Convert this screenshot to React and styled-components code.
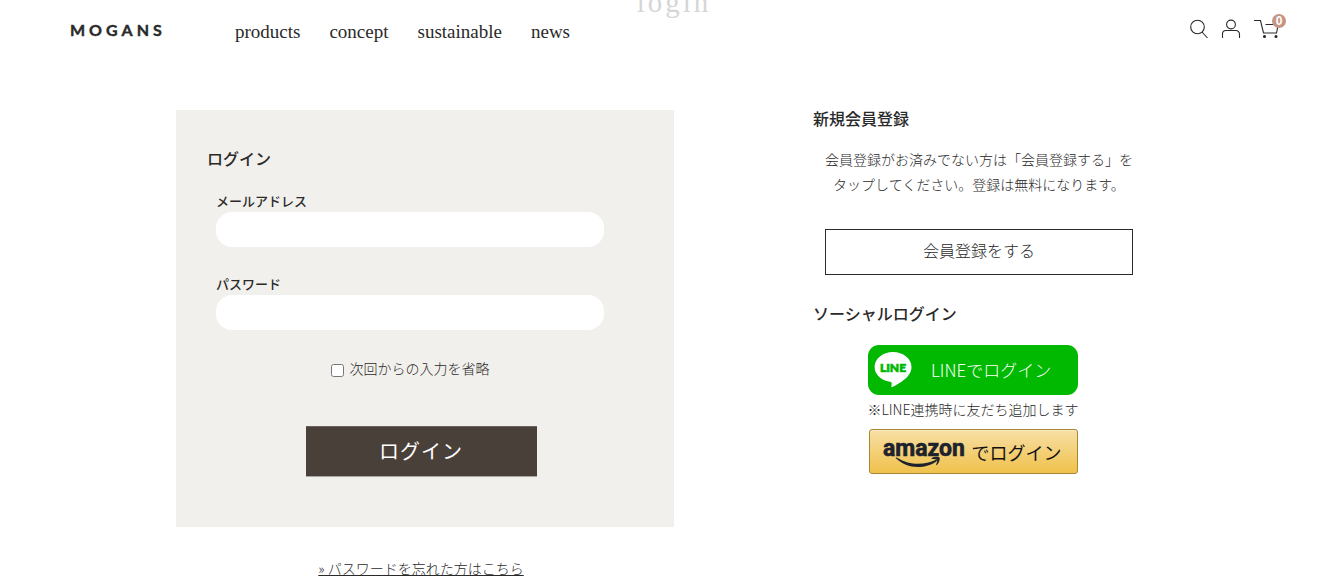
import React from 'react';
import styled, { createGlobalStyle } from 'styled-components';

const ink = '#2a2a2a';
const serif = '"Liberation Serif", "Noto Sans CJK JP", serif';

const GlobalStyle = createGlobalStyle`
  *, *::before, *::after { box-sizing: border-box; }
  body {
    margin: 0;
    background: #fff;
    color: ${ink};
    font-family: "Noto Sans CJK JP", sans-serif;
    font-size: 14px;
    font-weight: 300;
  }
  h1, h2, p { margin: 0; }
  a { color: inherit; }
  button, input { font-family: inherit; }
`;

const Page = styled.div`
  position: relative;
  overflow: hidden;
`;

const PageTitle = styled.h1`
  position: absolute;
  top: -16px;
  left: 0;
  width: 100%;
  padding-left: 6px;
  text-align: center;
  font: 400 29px/36px ${serif};
  letter-spacing: 3px;
  color: #d6d6d6;
  pointer-events: none;
`;

const Header = styled.header`
  display: flex;
  align-items: center;
  height: 60px;
  padding: 0 56px 0 70px;
`;

const Logo = styled.a`
  width: 165px;
  font: 700 16px/20px Lato, sans-serif;
  letter-spacing: 4px;
  text-decoration: none;
  -webkit-text-stroke: 0.4px ${ink};
`;

const Nav = styled.nav`
  display: flex;
  flex: 1;
  gap: 29px;
  padding-top: 3px;
`;

const NavLink = styled.a`
  font: 400 19px/24px ${serif};
  text-decoration: none;
`;

const Tools = styled.div`
  display: flex;
  align-items: center;
  gap: 12px;
  padding-bottom: 2px;
`;

const Tool = styled.a`
  position: relative;
  display: block;
  height: 20px;
  padding-right: ${(p) => (p.$badged ? '6px' : '0')};

  svg {
    display: block;
    fill: none;
    stroke: ${ink};
    stroke-width: 1.1;
  }
`;

const Badge = styled.span`
  position: absolute;
  top: -5px;
  right: 0;
  width: 14px;
  height: 14px;
  border-radius: 50%;
  background: #c59584;
  color: #fff;
  font: 700 12px/14px "Liberation Sans", sans-serif;
  text-align: center;
`;

const Main = styled.main`
  display: flex;
  justify-content: space-between;
  max-width: 990px;
  margin: 0 auto;
  padding-top: 50px;
`;

const LoginColumn = styled.section`
  flex: 0 1 498px;
`;

const SideColumn = styled.section`
  flex: 0 1 353px;
  padding-right: 33px;
`;

const Panel = styled.div`
  padding: 40px 48px 50px 31px;
  background: #f2f0ec;
`;

const Heading = styled.h2`
  font-size: 16px;
  line-height: 16px;
  font-weight: 500;
`;

const Form = styled.form`
  display: flex;
  flex-direction: column;
  padding: 25px 0 0 9px;
`;

const Field = styled.div`
  display: flex;
  flex-direction: column;
  margin: 0 22px 27px 0;
`;

const FieldLabel = styled.label`
  margin-bottom: 1px;
  font-size: 13px;
  line-height: 20px;
  font-weight: 500;
`;

const TextInput = styled.input`
  height: 35px;
  padding: 0 14px;
  border: 0;
  border-radius: 16px;
  background: #fff;
  font-size: 14px;
`;

const Remember = styled.label`
  display: flex;
  align-items: center;
  justify-content: center;
  gap: 6px;
  margin: 0 22px 0 0;
  line-height: 22px;

  input {
    width: 13px;
    height: 13px;
    margin: 4px 0 0;
  }
`;

const Submit = styled.button`
  align-self: center;
  width: 231px;
  height: 51px;
  margin-top: 47px;
  padding: 0 0 2px;
  border: 0;
  border-top: 1px solid #6b645e;
  border-bottom: 1px solid #aaa7a3;
  background: #4a403a;
  color: #fff;
  font-size: 20px;
  font-weight: 400;
  letter-spacing: 1px;
`;

const Forgot = styled.p`
  padding: 31px 8px 8px 0;
  line-height: 20px;
  text-align: center;
`;

const Join = styled.div`
  margin-bottom: 30px;
  padding: 21px 0 0 12px;
  text-align: center;
  line-height: 25px;
`;

const JoinButton = styled.button`
  display: block;
  width: 100%;
  height: 46px;
  margin-top: 32px;
  padding: 0 0 4px;
  border: 1px solid ${ink};
  background: #fff;
  color: inherit;
  font-size: 16px;
  font-weight: 300;
`;

const Social = styled.div`
  display: flex;
  flex-direction: column;
  align-items: center;
  padding-top: 24px;
`;

const SocialButton = styled.button`
  display: flex;
  align-items: center;
  padding: 0;
  border: 0;
  white-space: nowrap;
`;

const LineButton = styled(SocialButton)`
  gap: 19px;
  width: 210px;
  height: 50px;
  padding: 0 0 2px 6px;
  border-radius: 11px;
  background: #00b900;
  color: #fff;
  font-size: 17px;
  font-weight: 300;
`;

const AmazonButton = styled(SocialButton)`
  gap: 4px;
  width: 209px;
  height: 45px;
  padding-left: 13px;
  border: 1px solid #a88734;
  border-radius: 3px;
  background: linear-gradient(#f7dfa5, #f0c14b);
  box-shadow: inset 0 1px 0 #faeac4;
  color: #111;
  font-size: 18px;
  font-weight: 400;
`;

const Note = styled.p`
  margin: 4px 0 10px;
  line-height: 20px;
  white-space: nowrap;
`;

const LineLogo = () => (
  <svg width="38" height="38" viewBox="0 0 38 38" aria-hidden="true">
    <path
      fill="#fff"
      d="M19 2C8.900 2 .6 8.700 .6 17c0 7.400 6.500 13.600 15.400 14.800 1.700.3 1.900 1.200 1.600 2.700l-.3 2c-.1.600.4.900 1.100.600C22 35.400 30 30.500 33.800 26.200c2.500-2.800 3.700-5.700 3.700-9.200C37.500 8.700 29.200 2 19 2z"
    />
    <text
      x="19"
      y="22"
      textAnchor="middle"
      fill="#00b900"
      stroke="#00b900"
      strokeWidth=".7"
      fontFamily="Lato, sans-serif"
      fontSize="12"
      fontWeight="900"
    >
      LINE
    </text>
  </svg>
);

const AmazonLogo = () => (
  <svg width="85" height="34" viewBox="0 0 85 34" aria-hidden="true">
    <text
      x="0"
      y="21"
      fill="#1d222c"
      stroke="#1d222c"
      strokeWidth=".6"
      fontFamily="Roboto, sans-serif"
      fontSize="23"
      fontWeight="700"
    >
      amazon
    </text>
    <path
      fill="#1d222c"
      d="M13.500 22.500c8 4.700 14.500 6.300 21.500 6.300 6.500 0 12.500-1.500 18-4.100 1-.4 1.700.6.800 1.300-5.200 4.100-12.200 6-19 6-8.500 0-16-3.300-21.700-8.500-.6-.5-.2-1.300.4-1z"
    />
    <path
      fill="#1d222c"
      d="M48.500 23.200c2.600-1.800 7.200-1.500 8-.7.800 1-.3 5.600-2.800 7.600-.4.300-.8.100-.6-.3.700-1.700 1.500-4.300 1-5-.5-.7-3.400-.6-5.200-.9-.6-.1-.8-.4-.4-.7z"
    />
  </svg>
);

const navItems = ['products', 'concept', 'sustainable', 'news'];

export default function App() {
  return (
    <Page>
      <GlobalStyle />
      <PageTitle>login</PageTitle>
      <Header>
        <Logo href="#home">MOGANS</Logo>
        <Nav>
          {navItems.map((item) => (
            <NavLink key={item} href={`#${item}`}>
              {item}
            </NavLink>
          ))}
        </Nav>
        <Tools>
          <Tool href="#search" aria-label="search">
            <svg width="20" height="20" viewBox="0 0 20 20">
              <circle cx="8.500" cy="8" r="6.800" />
              <path d="M13 13l5.500 6" />
            </svg>
          </Tool>
          <Tool href="#account" aria-label="account">
            <svg width="20" height="20" viewBox="0 0 20 20">
              <circle cx="10" cy="5.500" r="4.400" />
              <path d="M1.500 19v-4a3.500 3.500 0 0 1 3.500-3.500h10a3.500 3.500 0 0 1 3.500 3.500V19" />
            </svg>
          </Tool>
          <Tool href="#cart" aria-label="cart" $badged>
            <svg width="27" height="20" viewBox="-1 0 27 20">
              <path d="M0 1.500h6.500l3 12.500H22.500l1.700-8.500H11.500" />
              <circle cx="10.500" cy="17.500" r="1" fill={ink} />
              <circle cx="22" cy="17.500" r="1" fill={ink} />
            </svg>
            <Badge>0</Badge>
          </Tool>
        </Tools>
      </Header>

      <Main>
        <LoginColumn>
          <Panel>
            <Heading>ログイン</Heading>
            <Form onSubmit={(e) => e.preventDefault()}>
              <Field>
                <FieldLabel htmlFor="email">メールアドレス</FieldLabel>
                <TextInput id="email" type="email" />
              </Field>
              <Field>
                <FieldLabel htmlFor="password">パスワード</FieldLabel>
                <TextInput id="password" type="password" />
              </Field>
              <Remember>
                <input type="checkbox" />
                次回からの入力を省略
              </Remember>
              <Submit type="submit">ログイン</Submit>
            </Form>
          </Panel>
          <Forgot>
            <a href="#forgot">» パスワードを忘れた方はこちら</a>
          </Forgot>
        </LoginColumn>

        <SideColumn>
          <Heading>新規会員登録</Heading>
          <Join>
            <p>
              会員登録がお済みでない方は「会員登録する」をタップしてください。登録は無料になります。
            </p>
            <JoinButton type="button">会員登録をする</JoinButton>
          </Join>
          <Heading>ソーシャルログイン</Heading>
          <Social>
            <LineButton type="button">
              <LineLogo />
              LINEでログイン
            </LineButton>
            <Note>※LINE連携時に友だち追加します</Note>
            <AmazonButton type="button" aria-label="amazonでログイン">
              <AmazonLogo />
              でログイン
            </AmazonButton>
          </Social>
        </SideColumn>
      </Main>
    </Page>
  );
}
